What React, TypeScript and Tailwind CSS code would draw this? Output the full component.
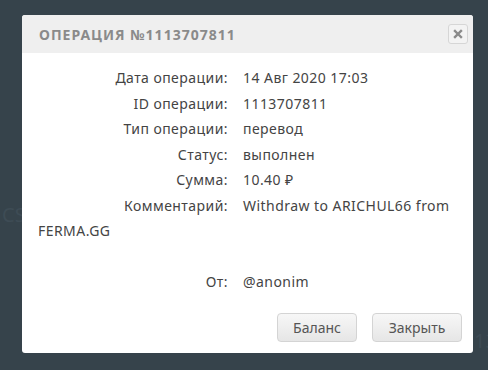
import React from 'react';

const rows: { label: string; value: string }[] = [
  { label: 'Дата операции:', value: '14 Авг 2020 17:03' },
  { label: 'ID операции:', value: '1113707811' },
  { label: 'Тип операции:', value: 'перевод' },
  { label: 'Статус:', value: 'выполнен' },
  { label: 'Сумма:', value: '10.40 ₽' },
  { label: 'Комментарий:', value: 'Withdraw to ARICHUL66 from FERMA.GG' },
];

const Row = ({ label, value }: { label: string; value: string }) => (
  <div className="leading-[25.5px]">
    <span className="inline-block w-[190px] text-right">{label}</span>
    <span className="ml-[15px]">{value}</span>
  </div>
);

export default function App() {
  return (
    <div
      className="relative h-[370px] w-[488px] overflow-hidden bg-[#36434b] pl-[22px] pt-[15px]"
      style={{ fontFamily: '"Noto Sans", "Liberation Sans", sans-serif' }}
    >
      {/* faint page content behind the overlay */}
      <span className="absolute left-[2px] top-[200px] text-[20px] text-[#3e4c55]">CS</span>
      <span className="absolute left-[474px] top-[326px] text-[20px] text-[#3e4c55]">13</span>

      <div className="relative flex h-[338px] w-[451px] flex-col overflow-hidden rounded-[3px] bg-white">
        {/* header */}
        <div className="flex h-[38px] items-center justify-between bg-[#efefef] pl-[17px] pr-[5px]">
          <h2 className="text-[14px] font-bold uppercase tracking-[1px] text-[#8a8a8a]">
            Операция №1113707811
          </h2>
          <button className="flex h-[20px] w-[20px] items-center justify-center rounded-[3px] border border-[#d6d6d6] bg-[#f3f3f3]">
            <svg width="10" height="10" viewBox="0 0 10 10">
              <path d="M2 2 L8 8 M8 2 L2 8" stroke="#8a8a8a" strokeWidth="2.4" strokeLinecap="square" />
            </svg>
          </button>
        </div>

        {/* body */}
        <div className="flex-1 pl-[16px] pr-[16px] pt-[12px] text-[14px] tracking-[0.45px] text-[#444]">
          {rows.map((r) => (
            <Row key={r.label} label={r.label} value={r.value} />
          ))}
          <div className="h-[25.5px]" />
          <Row label="От:" value="@anonim" />
        </div>

        {/* footer */}
        <div className="flex justify-end gap-[15px] px-[11px] pb-[11px]">
          <button className="h-[29px] w-[80px] rounded-[4px] border border-[#d4d4d4] bg-gradient-to-b from-[#f7f7f7] to-[#e6e6e6] text-[14px] text-[#555]">
            Баланс
          </button>
          <button className="h-[29px] w-[90px] rounded-[4px] border border-[#d4d4d4] bg-gradient-to-b from-[#f7f7f7] to-[#e6e6e6] text-[14px] text-[#555]">
            Закрыть
          </button>
        </div>
      </div>
    </div>
  );
}
